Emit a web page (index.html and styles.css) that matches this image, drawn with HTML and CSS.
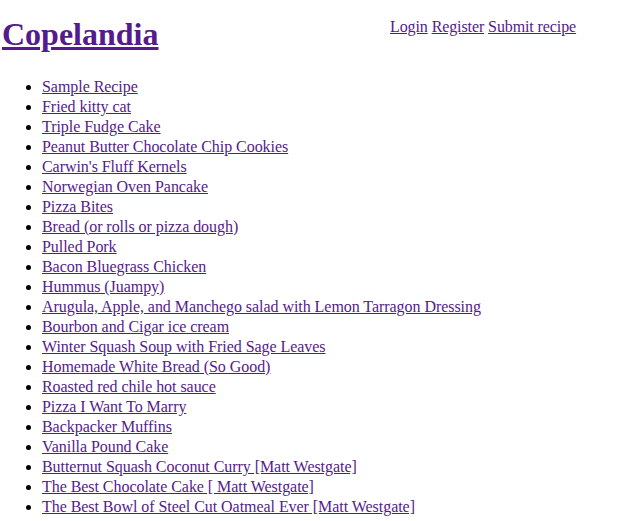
FILE: index.html
```html
<!DOCTYPE html>
<html>
<head>
<meta charset="utf-8">
<title>Copelandia</title>
<link rel="stylesheet" href="styles.css">
</head>
<body>
<div class="header">
  <h1 class="title"><a href="#">Copelandia</a></h1>
  <div class="nav">
    <a href="#">Login</a>
    <a href="#">Register</a>
    <a href="#">Submit recipe</a>
  </div>
</div>
<ul class="recipes">
  <li><a href="#">Sample Recipe</a></li>
  <li><a href="#">Fried kitty cat</a></li>
  <li><a href="#">Triple Fudge Cake</a></li>
  <li><a href="#">Peanut Butter Chocolate Chip Cookies</a></li>
  <li><a href="#">Carwin's Fluff Kernels</a></li>
  <li><a href="#">Norwegian Oven Pancake</a></li>
  <li><a href="#">Pizza Bites</a></li>
  <li><a href="#">Bread (or rolls or pizza dough)</a></li>
  <li><a href="#">Pulled Pork</a></li>
  <li><a href="#">Bacon Bluegrass Chicken</a></li>
  <li><a href="#">Hummus (Juampy)</a></li>
  <li><a href="#">Arugula, Apple, and Manchego salad with Lemon Tarragon Dressing</a></li>
  <li><a href="#">Bourbon and Cigar ice cream</a></li>
  <li><a href="#">Winter Squash Soup with Fried Sage Leaves</a></li>
  <li><a href="#">Homemade White Bread (So Good)</a></li>
  <li><a href="#">Roasted red chile hot sauce</a></li>
  <li><a href="#">Pizza I Want To Marry</a></li>
  <li><a href="#">Backpacker Muffins</a></li>
  <li><a href="#">Vanilla Pound Cake</a></li>
  <li><a href="#">Butternut Squash Coconut Curry [Matt Westgate]</a></li>
  <li><a href="#">The Best Chocolate Cake [ Matt Westgate]</a></li>
  <li><a href="#">The Best Bowl of Steel Cut Oatmeal Ever [Matt Westgate]</a></li>
</ul>
</body>
</html>
```
FILE: styles.css
```css
html, body {
  margin: 0;
  padding: 0;
  background: #ffffff;
}
body {
  font-family: "Liberation Serif", "Times New Roman", serif;
  font-size: 16px;
  color: #000000;
  padding: 0 2px;
}
a {
  color: #551a8b;
  text-decoration: underline;
}
.header {
  display: flex;
  align-items: flex-start;
}
.title {
  font-size: 32px;
  font-weight: bold;
  line-height: 37px;
  margin: 16px 0 0 0;
  width: 388px;
}
.nav {
  margin-top: 17px;
  line-height: 20px;
  letter-spacing: -0.1px;
}
.recipes {
  margin: 24px 0 0 0;
  padding: 0 0 0 40px;
  line-height: 20px;
  letter-spacing: -0.05px;
}
```
